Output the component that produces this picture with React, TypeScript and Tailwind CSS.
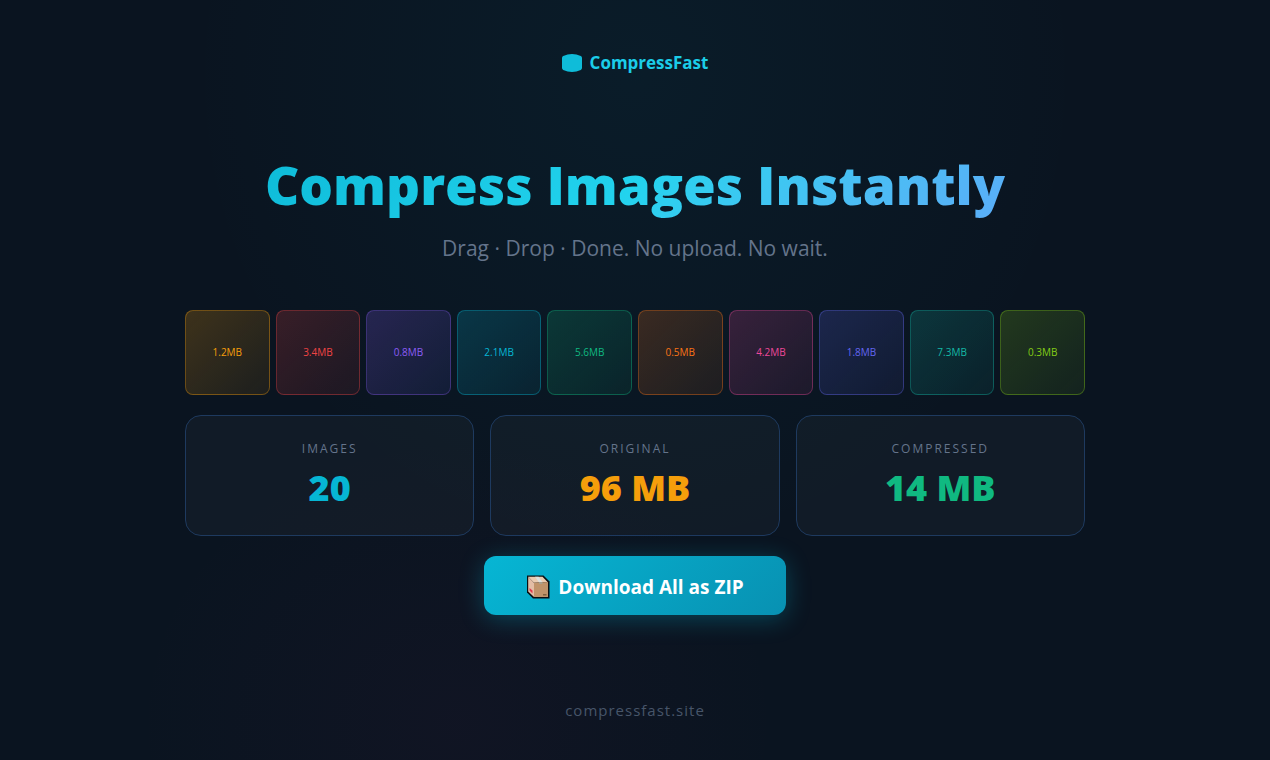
const THUMBS = [
  { size: "1.2MB", style: "from-[#f59e0b]/22 to-[#f59e0b]/8 border-[#f59e0b]/35 text-[#f59e0b]" },
  { size: "3.4MB", style: "from-[#ef4444]/20 to-[#ef4444]/8 border-[#ef4444]/35 text-[#ef4444]" },
  { size: "0.8MB", style: "from-[#8b5cf6]/22 to-[#6366f1]/10 border-[#8b5cf6]/30 text-[#8b5cf6]" },
  { size: "2.1MB", style: "from-[#06b6d4]/20 to-[#06b6d4]/8 border-[#06b6d4]/35 text-[#06b6d4]" },
  { size: "5.6MB", style: "from-[#10b981]/20 to-[#10b981]/8 border-[#10b981]/35 text-[#10b981]" },
  { size: "0.5MB", style: "from-[#f97316]/20 to-[#f97316]/8 border-[#f97316]/35 text-[#f97316]" },
  { size: "4.2MB", style: "from-[#ec4899]/20 to-[#ec4899]/8 border-[#ec4899]/35 text-[#ec4899]" },
  { size: "1.8MB", style: "from-[#6366f1]/20 to-[#6366f1]/8 border-[#6366f1]/35 text-[#6366f1]" },
  { size: "7.3MB", style: "from-[#14b8a6]/20 to-[#14b8a6]/8 border-[#14b8a6]/35 text-[#14b8a6]" },
  { size: "0.3MB", style: "from-[#84cc16]/20 to-[#84cc16]/8 border-[#84cc16]/35 text-[#84cc16]" },
];

const STATS = [
  { label: "Images", value: "20", color: "text-[#06b6d4]" },
  { label: "Original", value: "96 MB", color: "text-[#f59e0b]" },
  { label: "Compressed", value: "14 MB", color: "text-[#10b981]" },
];

function LogoMark() {
  return (
    <svg className="w-5 h-5" viewBox="0 0 20 20" fill="#0fbcd9" aria-hidden>
      <path d="M0 5Q0 3.700 1.200 3.100Q5.500 1 10 1Q14.500 1 18.800 3.100Q20 3.700 20 5V15Q20 16.300 18.800 16.900Q14.500 19 10 19Q5.500 19 1.200 16.900Q0 16.300 0 15Z" />
    </svg>
  );
}

function PackageIcon() {
  return (
    <svg className="w-6 h-6" viewBox="0 0 24 24" aria-hidden>
      <path d="M1 0.500H17.500L23.500 6.500V23.500H7L1 17.500Z" fill="#0b0f12" />
      <path d="M2.200 1.800H16.500L21.500 7L8 7.800Z" fill="#eacbb0" />
      <path d="M2.200 1.800L8 7.800V22L2.200 16.500Z" fill="#e3bda5" />
      <path d="M8 7.800L22 7V22H8Z" fill="#bf936a" />
      <path d="M9 1.800H12.500L16.500 7.300H13Z" fill="#dce0df" />
      <path d="M13 7.300H16.500V9H13Z" fill="#a9a08e" />
      <path d="M3.500 13L6.500 15.500V18.500L3.500 15.500Z" fill="#e2384d" />
      <path d="M17 19H20.500V20.500H17Z" fill="#80603f" />
    </svg>
  );
}

export default function App() {
  return (
    <div className="min-h-screen flex flex-col items-center px-8 bg-[#0a1420] bg-[radial-gradient(ellipse_at_50%_10%,rgba(6,182,212,0.05),transparent_50%),radial-gradient(ellipse_at_36%_95%,rgba(139,30,100,0.05),transparent_28%)] font-['Open_Sans',sans-serif]">
      <header className="pt-[49px] flex items-center gap-2">
        <LogoMark />
        <span className="text-[17px] leading-7 font-bold text-[#1bcde8]">CompressFast</span>
      </header>

      <main className="flex-1 w-full max-w-[900px] pb-[11px] flex flex-col items-center justify-center gap-5">
        <div className="w-full flex flex-col gap-[11px] pb-[26px] text-center">
          <h1 className="text-[53px] leading-[72px] font-extrabold bg-linear-135 from-[#06b6d4] via-[#22d3ee] to-[#60a5fa] bg-clip-text text-transparent">
            Compress Images Instantly
          </h1>
          <p className="text-[21px] leading-8 text-[#64748b]">
            Drag · Drop · Done. No upload. No wait.
          </p>
        </div>

        <ul className="w-full grid grid-cols-10 gap-1.5">
          {THUMBS.map((t) => (
            <li
              key={t.size}
              className={`aspect-square flex items-center justify-center rounded-lg border bg-linear-135 text-[10px] ${t.style}`}
            >
              {t.size}
            </li>
          ))}
        </ul>

        <dl className="w-full grid grid-cols-3 gap-4">
          {STATS.map((s) => (
            <div
              key={s.label}
              className="pt-6 pb-[23px] flex flex-col items-center gap-1.5 rounded-2xl border border-[#1e3a5f] bg-white/3"
            >
              <dt className="text-xs leading-[18px] tracking-[2px] uppercase text-[#64748b]">{s.label}</dt>
              <dd className={`text-4xl leading-12 font-extrabold ${s.color}`}>{s.value}</dd>
            </div>
          ))}
        </dl>

        <button
          type="button"
          className="px-[42px] pt-[18px] pb-3.5 flex items-center gap-2 rounded-xl bg-linear-135 from-[#06b6d4] to-[#0891b2] text-white text-[19px] leading-[27px] font-bold shadow-[0_4px_24px_rgba(6,182,212,0.3)] cursor-pointer"
        >
          <PackageIcon />
          Download All as ZIP
        </button>
      </main>

      <footer className="pb-[38px]">
        <a href="#" className="text-[15px] tracking-[1px] text-[#475569]">
          compressfast.site
        </a>
      </footer>
    </div>
  );
}
